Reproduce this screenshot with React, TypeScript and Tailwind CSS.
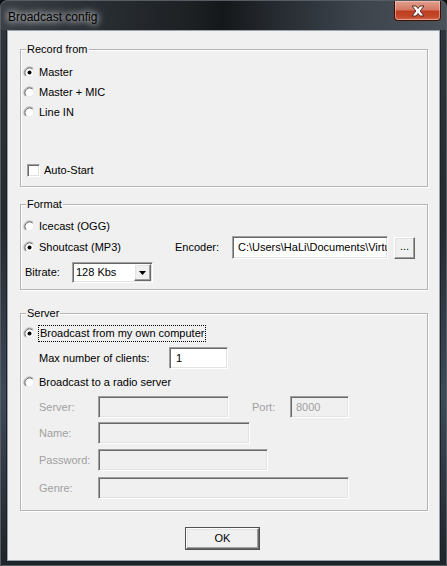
import type { ReactNode } from "react";

const SUNKEN =
  "border border-t-[#a0a0a0] border-l-[#a0a0a0] border-r-white border-b-white shadow-[inset_1px_1px_0_#696969,inset_-1px_-1px_0_#e3e3e3]";
const RAISED =
  "border border-t-white border-l-white border-r-[#696969] border-b-[#696969] shadow-[inset_-1px_-1px_0_#a0a0a0,inset_1px_1px_0_#e3e3e3] bg-[#f0f0f0]";

function Radio({ checked = false }: { checked?: boolean }) {
  return (
    <svg width="13" height="13" viewBox="0 0 13 13" className="shrink-0">
      <circle cx="6.5" cy="6.5" r="5" fill="#fff" />
      {/* outer ring: shadow on the upper left, highlight on the lower right */}
      <path d="M2.61 10.39 A5.5 5.5 0 0 1 10.39 2.61" fill="none" stroke="#a0a0a0" />
      <path d="M10.39 2.61 A5.5 5.5 0 0 1 2.61 10.39" fill="none" stroke="#f8f8f8" />
      {/* inner ring */}
      <path d="M3.32 9.68 A4.5 4.5 0 0 1 9.68 3.32" fill="none" stroke="#696969" />
      <path d="M9.68 3.32 A4.5 4.5 0 0 1 3.32 9.68" fill="none" stroke="#e3e3e3" />
      {checked && <circle cx="6.5" cy="6.5" r="2" fill="#000" />}
    </svg>
  );
}

function RadioRow({ label, checked, focused }: { label: string; checked?: boolean; focused?: boolean }) {
  return (
    <div className="h-[20px] flex items-center pl-[2px]">
      <Radio checked={checked} />
      <span
        className={`ml-[3px] leading-[15px] ${focused ? "outline outline-1 outline-dotted outline-black px-[1px]" : ""}`}
      >
        {label}
      </span>
    </div>
  );
}

function GroupBox({ title, className, children }: { title: string; className: string; children: ReactNode }) {
  return (
    <div
      className={`relative ml-[12px] w-[408px] border border-[#b4b4b4] shadow-[inset_1px_1px_0_#fff,1px_1px_0_#fff] ${className}`}
    >
      <span className="absolute -top-[8px] left-[5px] px-[1px] bg-[#f0f0f0] leading-[14px]">{title}</span>
      {children}
    </div>
  );
}

function Field({ w, value = "", disabled = false, className = "" }: { w: string; value?: string; disabled?: boolean; className?: string }) {
  return (
    <div
      className={`${SUNKEN} ${w} h-[22px] flex items-center pl-[5px] overflow-hidden whitespace-nowrap ${
        disabled ? "bg-[#f0f0f0] text-[#a0a0a0]" : "bg-white text-black"
      } ${className}`}
    >
      {value}
    </div>
  );
}

function DisabledRow({ label, w, children }: { label: string; w: string; children?: ReactNode }) {
  return (
    <div className="flex items-center pl-[18px] h-[22px]">
      <span className="w-[59px] text-[#a0a0a0]">{label}</span>
      <Field w={w} disabled />
      {children}
    </div>
  );
}

export default function App() {
  return (
    <div className="w-[447px] h-[566px] bg-[#0d0f11] overflow-hidden font-['Liberation_Sans',Arial,sans-serif] text-[11px] text-black">
      <div className="h-full flex flex-col rounded-t-[7px] border border-[#565c63] bg-[linear-gradient(180deg,#30363d_0%,#252a30_40%,#3d4a58_70%,#1f2429_100%)] shadow-[inset_0_1px_0_#9aa2aa]">
        {/* caption */}
        <div className="h-[29px] shrink-0 relative rounded-t-[6px] bg-[linear-gradient(90deg,#3a3f45_0%,#2b3036_18%,#1d2124_42%,#15181a_50%,#262b31_62%,#3d444c_80%,#4a5159_100%)]">
          <span className="absolute left-[7px] top-[8px] text-[12px] leading-[16px] text-black [text-shadow:0_0_6px_rgba(255,255,255,0.95),0_0_10px_rgba(255,255,255,0.8)]">
            Broadcast config
          </span>
          <div className="absolute right-[5px] top-0 w-[47px] h-[20px] rounded-b-[4px] border border-t-0 border-[#3a1208] bg-[linear-gradient(180deg,#e0a090_0%,#d47a64_45%,#bf3d21_55%,#c44a2c_85%,#d37258_100%)] shadow-[inset_0_0_0_1px_rgba(255,210,200,0.5)] flex items-center justify-center">
            <svg width="14" height="12" viewBox="0 0 14 12">
              <path
                d="M1 1 H5 L7 3.5 L9 1 H13 L9.2 6 L13 11 H9 L7 8.5 L5 11 H1 L4.8 6 Z"
                fill="#fff"
                stroke="#5a2a20"
                strokeWidth="1"
                strokeLinejoin="round"
              />
            </svg>
          </div>
        </div>

        {/* client area */}
        <div className="mx-[6px] h-[531px] shrink-0 border border-[#9aa3ab] bg-[#f0f0f0] shadow-[0_0_0_1px_#1c2024] flex flex-col">
          <GroupBox title="Record from" className="mt-[18px] h-[138px] pt-[12px]">
            <RadioRow label="Master" checked />
            <RadioRow label="Master + MIC" />
            <RadioRow label="Line IN" />
            <div className="h-[20px] mt-[38px] flex items-center pl-[6px]">
              <div className={`${SUNKEN} w-[13px] h-[13px] bg-white`} />
              <span className="ml-[4px]">Auto-Start</span>
            </div>
          </GroupBox>

          <GroupBox title="Format" className="mt-[17px] h-[86px] pt-[11px]">
            <RadioRow label="Icecast (OGG)" />
            <div className="flex items-center h-[23px]">
              <div className="w-[154px]">
                <RadioRow label="Shoutcast (MP3)" checked />
              </div>
              <span className="w-[57px]">Encoder:</span>
              <Field w="w-[156px]" value="C:\Users\HaLi\Documents\Virtu" className="h-[23px] pl-[4px]" />
              <div className={`${RAISED} ml-[6px] w-[21px] h-[22px] flex items-center justify-center leading-none pb-[3px]`}>
                ...
              </div>
            </div>
            <div className="flex items-center h-[21px] mt-[3px] pl-[4px]">
              <span className="w-[47px]">Bitrate:</span>
              <div className={`${SUNKEN} w-[81px] h-[21px] bg-white flex items-center justify-between`}>
                <span className="pl-[3px]">128 Kbs</span>
                <div className={`${RAISED} w-[17px] h-[17px] mr-[1px] flex items-center justify-center`}>
                  <svg width="7" height="4" viewBox="0 0 7 4">
                    <path d="M0 0 H7 L3.5 4 Z" fill="#000" />
                  </svg>
                </div>
              </div>
            </div>
          </GroupBox>

          <GroupBox title="Server" className="mt-[23px] h-[198px] pt-[9px]">
            <RadioRow label="Broadcast from my own computer" checked focused />
            <div className="flex items-center pl-[18px] h-[22px] mt-[4px]">
              <span className="w-[130px]">Max number of clients:</span>
              <Field w="w-[59px]" value="1" className="pl-[6px]" />
            </div>
            <div className="mt-[3px]">
              <RadioRow label="Broadcast to a radio server" />
            </div>
            <div className="flex flex-col mt-[4px]">
              <DisabledRow label="Server:" w="w-[131px]">
                <span className="ml-[23px] w-[38px] text-[#a0a0a0]">Port:</span>
                <Field w="w-[59px]" value="8000" disabled className="items-start pt-[2px]" />
              </DisabledRow>
              <div className="mt-[4px]">
                <DisabledRow label="Name:" w="w-[152px]" />
              </div>
              <div className="mt-[5px]">
                <DisabledRow label="Password:" w="w-[170px]" />
              </div>
              <div className="mt-[6px]">
                <DisabledRow label="Genre:" w="w-[251px]" />
              </div>
            </div>
          </GroupBox>

          <div className="mt-[16px] ml-[177px]">
            <div className="w-[75px] h-[23px] border border-[#505050] flex">
              <div className={`${RAISED} flex-1 flex items-center justify-center`}>OK</div>
            </div>
          </div>
        </div>
      </div>
    </div>
  );
}
